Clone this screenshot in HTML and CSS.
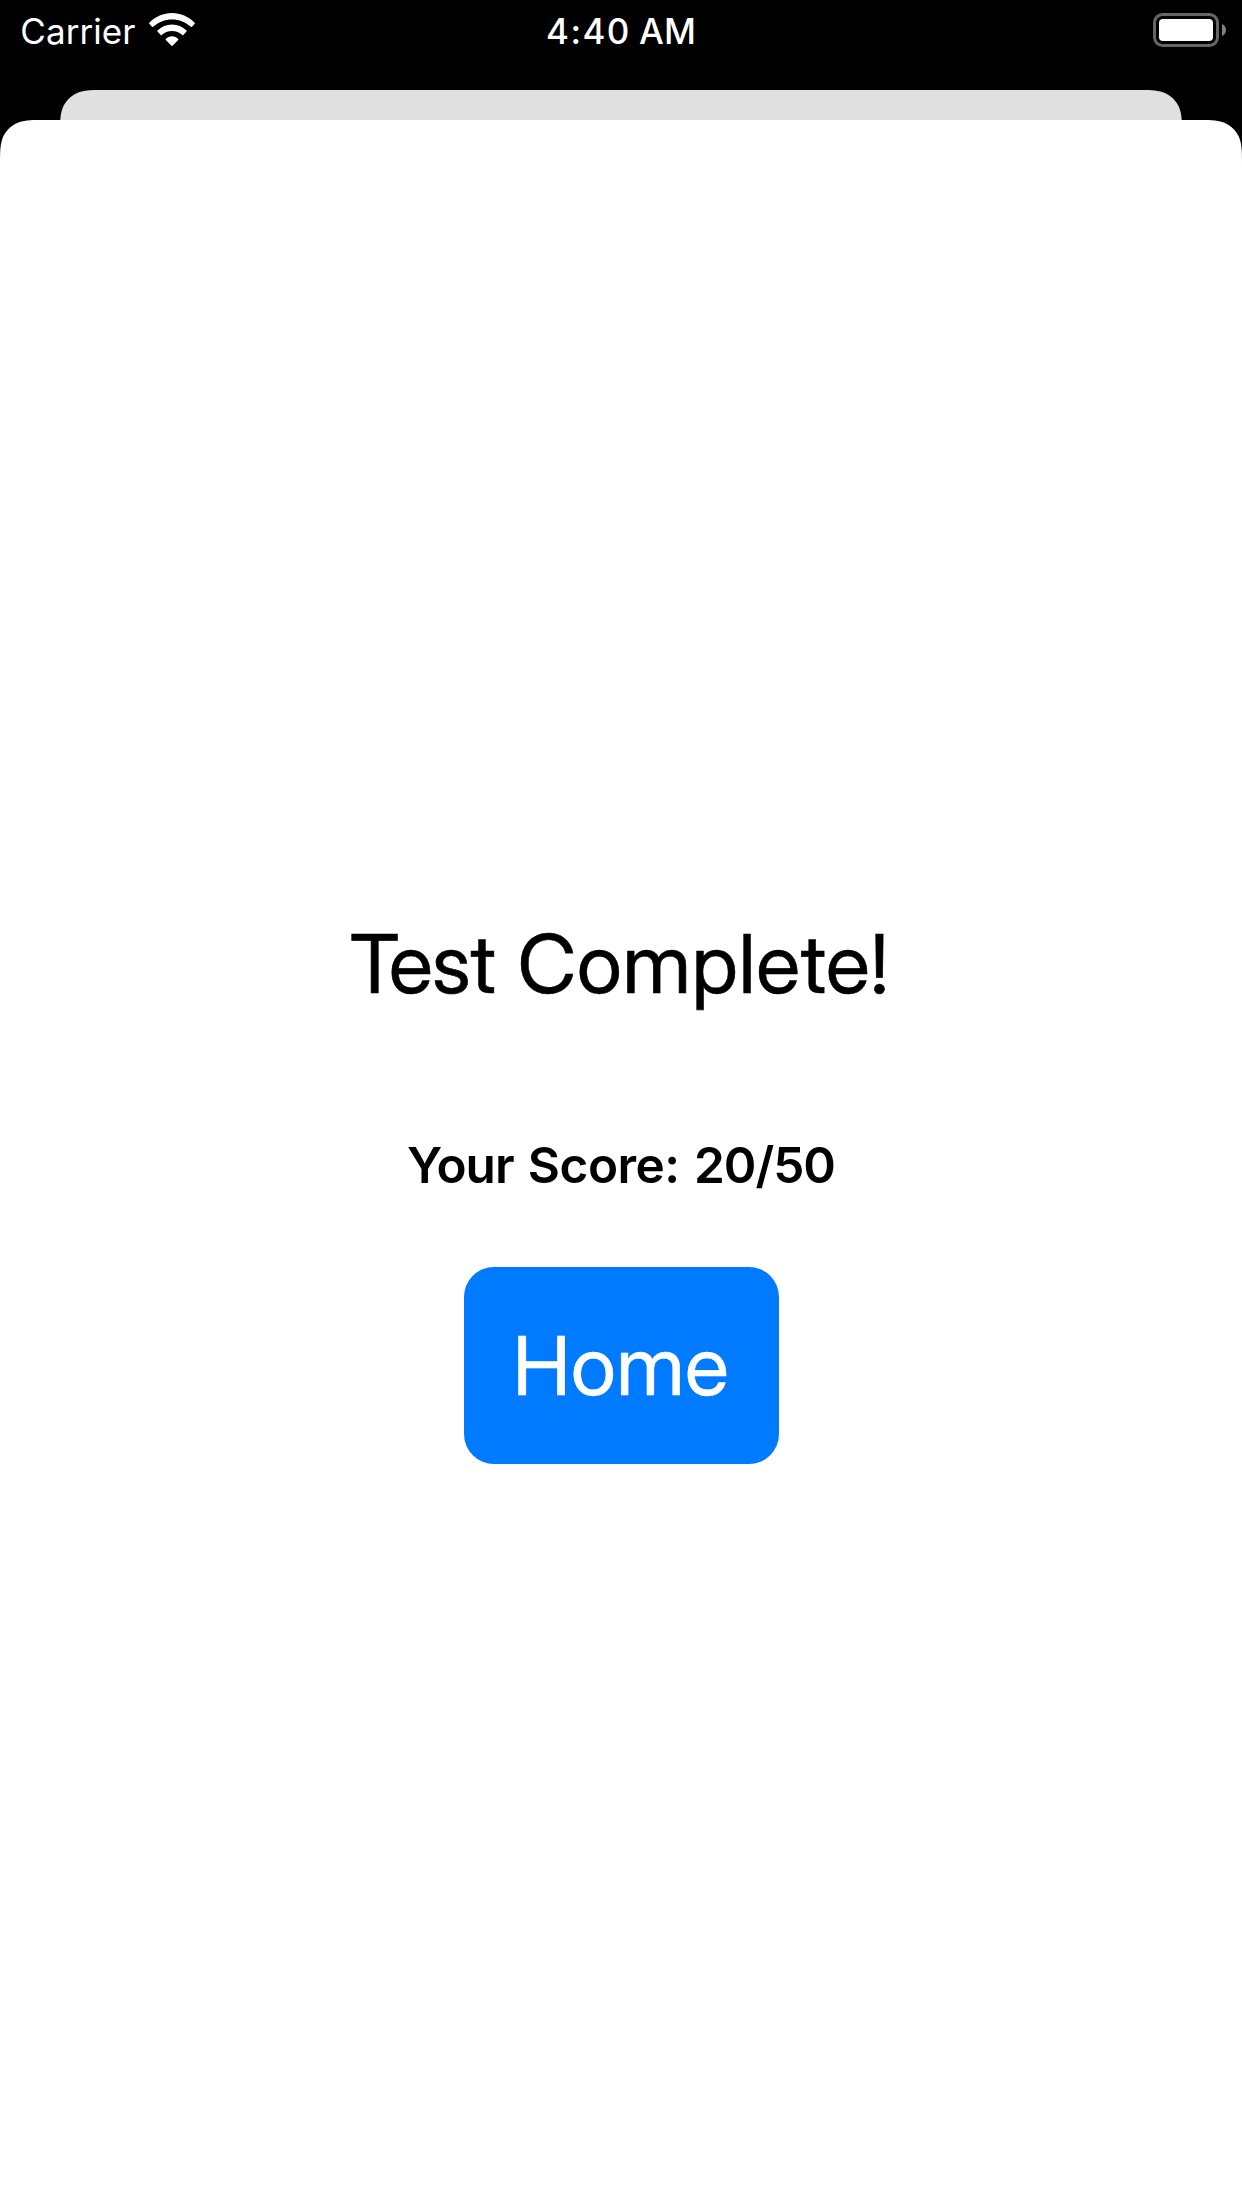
FILE: index.html
```
<!DOCTYPE html>
<html lang="en">
<head>
<meta charset="utf-8">
<title>Test Complete</title>
<link rel="stylesheet" href="styles.css">
</head>
<body>
<div class="screen">
  <header class="status">
    <div class="network">
      <span class="carrier">Carrier</span>
      <svg class="wifi" width="48" height="36" viewBox="148 12 48 36" fill="#fff">
        <path d="M149.3 22.8C155.5 16.5 163.5 13 172 13S188.500 16.500 194.700 22.800Q195.200 23.300 194.700 23.800L192 26.800Q191.400 27.300 190.900 26.800C185.700 22 179.200 19.400 172 19.400S158.300 22 153.100 26.800Q152.600 27.300 152 26.800L149.300 23.800Q148.800 23.300 149.300 22.800Z"/>
        <path d="M157.500 30.600C161.500 26.800 166.500 24.600 172 24.600S182.500 26.800 186.500 30.600Q187 31.100 186.500 31.600L183.300 34.900Q182.800 35.400 182.200 34.900C179.400 32.400 175.900 30.900 172 30.900S164.600 32.400 161.800 34.900Q161.200 35.400 160.700 34.900L157.500 31.600Q157 31.100 157.500 30.600Z"/>
        <path d="M165.800 39C167.500 37.200 169.600 36.200 172 36.200S176.500 37.200 178.200 39Q178.700 39.500 178.200 40L172.500 45.700Q172 46.200 171.500 45.700L165.800 40Q165.300 39.500 165.800 39Z"/>
      </svg>
    </div>
    <span class="time"><span class="clock">4:40</span> AM</span>
    <svg class="battery" width="76" height="36" viewBox="1152 12 76 36">
      <rect x="1154.500" y="14.500" width="63" height="31" rx="8" fill="none" stroke="#666" stroke-width="3"/>
      <rect x="1159" y="19" width="54" height="22" rx="4" fill="#fff"/>
      <path d="M1222 24C1227.300 26.300 1227.300 33.700 1222 36Z" fill="#808080"/>
    </svg>
  </header>
  <div class="backcard"></div>
  <main class="sheet">
    <h1 class="title"><span class="tight">Test</span> Complete!</h1>
    <p class="score"><span class="tight">Your</span> Score: <span class="tight">20/50</span></p>
    <button class="home">Home</button>
  </main>
</div>
</body>
</html>
```
FILE: styles.css
```
* { box-sizing: border-box; }

body {
  margin: 0;
  background: #000;
  font-family: Inter, "Liberation Sans", sans-serif;
}

.screen {
  display: flex;
  flex-direction: column;
  width: 1242px;
  height: 2208px;
  background: #000;
  overflow: hidden;
}

.status {
  display: grid;
  grid-template-columns: 1fr auto 1fr;
  height: 90px;
  padding: 12px 14px 0;
  color: #fff;
  font-size: 35px;
  line-height: 38px;
}

.network {
  display: flex;
  align-items: flex-start;
  gap: 12.8px;
  padding-left: 6.3px;
}

.carrier { letter-spacing: 0.07px; }

.wifi,
.battery { display: block; }

.battery { justify-self: end; }

.time {
  font-weight: 500;
  letter-spacing: 0.1px;
  word-spacing: -1.2px;
}

.clock { letter-spacing: 1.4px; }

.backcard {
  height: 30px;
  margin: 0 60px;
  background: #e0e0e0;
  clip-path: path("M0 60V45.860C0 32.650 0 26.050 2.250 18.940C5.070 11.180 11.180 5.070 18.940 2.250C26.050 0 32.650 0 45.860 0H1076.140C1089.350 0 1095.950 0 1103.060 2.250C1110.820 5.070 1116.930 11.180 1119.750 18.940C1122 26.050 1122 32.650 1122 45.860V60Z");
}

.sheet {
  flex: 1;
  display: flex;
  flex-direction: column;
  align-items: center;
  padding-top: 794px;
  background: #fff;
  color: #000;
  clip-path: path("M0 2088V45.860C0 32.650 0 26.050 2.250 18.940C5.070 11.180 11.180 5.070 18.940 2.250C26.050 0 32.650 0 45.860 0H1196.140C1209.350 0 1215.950 0 1223.060 2.250C1230.820 5.070 1236.930 11.180 1239.750 18.940C1242 26.050 1242 32.650 1242 45.860V2088Z");
}

.title {
  margin: 0;
  padding-right: 3px;
  font-family: "Inter Display", Inter, sans-serif;
  font-size: 81.5px;
  font-weight: 400;
  line-height: 100px;
  letter-spacing: 0.8px;
  word-spacing: 1.2px;
  -webkit-text-stroke: 0.6px currentColor;
}

.title .tight { letter-spacing: -0.85px; }

.score {
  margin: 121px 0 0;
  font-size: 49.5px;
  font-weight: 600;
  line-height: 60px;
  letter-spacing: -0.5px;
  word-spacing: 2.3px;
}

.score .tight { letter-spacing: -1px; }

.home {
  width: 315px;
  height: 197px;
  margin: 72px 0 0;
  padding: 1px 0 0;
  border: 0;
  border-radius: 30px;
  background: #007aff;
  color: #fff;
  font-family: "Inter Display", Inter, sans-serif;
  font-size: 81.5px;
  font-weight: 400;
  line-height: 100px;
  letter-spacing: 0.5px;
  -webkit-text-stroke: 0.6px currentColor;
}
```
